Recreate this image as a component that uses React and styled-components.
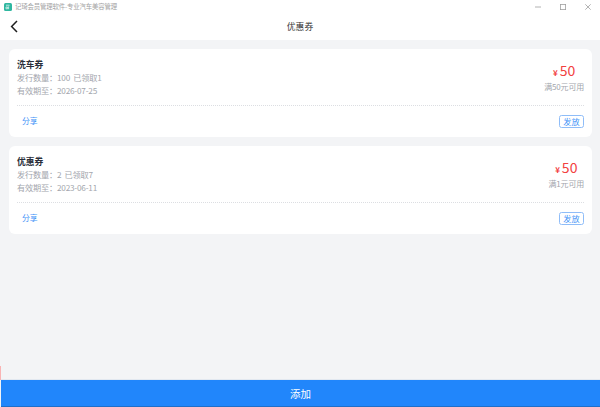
import React from "react";
import styled, { createGlobalStyle } from "styled-components";

const GlobalStyle = createGlobalStyle`
  html, body {
    margin: 0;
    padding: 0;
    background: #f3f4f6;
  }
  * {
    box-sizing: border-box;
  }
`;

const FONT = `"Noto Sans CJK SC", "Noto Sans", sans-serif`;

const Page = styled.div`
  position: relative;
  width: 600px;
  height: 407px;
  overflow: hidden;
  display: flex;
  flex-direction: column;
  background: #f3f4f6;
  font-family: ${FONT};
`;

const TitleBar = styled.div`
  height: 13px;
  flex: none;
  display: flex;
  align-items: center;
  padding: 0 9px 0 4px;
  background: #fff;
`;

const AppName = styled.span`
  margin-left: 3px;
  font-size: 6.4px;
  letter-spacing: -0.15px;
  line-height: 13px;
  color: #a2a2a2;
  white-space: nowrap;
`;

const WindowButtons = styled.div`
  margin-left: auto;
  display: flex;
  align-items: center;
  gap: 19px;
`;

const Header = styled.div`
  height: 27px;
  flex: none;
  display: flex;
  align-items: center;
  justify-content: center;
  position: relative;
  background: #fff;
`;

const BackButton = styled.div`
  position: absolute;
  left: 10px;
  top: 7px;
  display: flex;
`;

const HeaderTitle = styled.div`
  font-size: 8.8px;
  color: #333;
  line-height: 27px;
`;

const List = styled.div`
  flex: 1;
  display: flex;
  flex-direction: column;
  gap: 9px;
  padding: 9px 8px 0 9px;
`;

const Card = styled.div`
  height: 88px;
  background: #fff;
  border-radius: 6px;
  padding: 0 8px;
  display: flex;
  flex-direction: column;
`;

const CardTop = styled.div`
  height: 57px;
  display: flex;
  justify-content: space-between;
  border-bottom: 1px dotted #dcdee2;
`;

const Info = styled.div`
  padding-top: 9px;
`;

const CardTitle = styled.div`
  font-size: 8.8px;
  font-weight: 700;
  line-height: 13px;
  color: #2b2f3a;
`;

const InfoRow = styled.div`
  font-size: 8.2px;
  letter-spacing: -0.2px;
  line-height: 13px;
  color: #a3a6ad;
  white-space: pre;
`;

const Price = styled.div`
  display: flex;
  flex-direction: column;
  align-items: center;
  padding-top: 13px;
`;

const Amount = styled.div`
  color: #f2413f;
  font-size: 14px;
  line-height: 16px;
  display: flex;
  align-items: baseline;
`;

const Yen = styled.span`
  font-size: 8px;
  font-weight: 700;
  margin-right: 2px;
`;

const Condition = styled.div`
  font-size: 8px;
  letter-spacing: -0.2px;
  line-height: 12px;
  color: #a3a6ad;
`;

const CardBottom = styled.div`
  flex: 1;
  display: flex;
  align-items: center;
  justify-content: space-between;
  padding-bottom: 1px;
`;

const ShareLink = styled.span`
  margin: 0 0 1px 5px;
  font-size: 7.8px;
  color: #3f93f7;
`;

const SendButton = styled.div`
  width: 25px;
  height: 13px;
  border: 1px solid #8fbdf8;
  border-radius: 2.5px;
  font-size: 8.2px;
  line-height: 11px;
  text-align: center;
  color: #3f93f7;
`;

const AddButton = styled.div`
  height: 27px;
  flex: none;
  margin-left: 1px;
  background: #2186fb;
  border-bottom: 1px solid #1f6fc9;
  color: #fff;
  font-size: 10.5px;
  line-height: 27px;
  text-align: center;
  box-shadow: 0 -1px 0 #e2e8f0;
`;

const EdgeMark = styled.div`
  position: absolute;
  left: 0;
  top: 366px;
  width: 1px;
  height: 14px;
  background: #f9b4b4;
`;

const AppIcon = () => (
  <svg width="8" height="8" viewBox="0 0 8 8">
    <rect width="8" height="8" rx="1.5" fill="#2fb7a0" />
    <path d="M2 2.2h3.6M2 4h1.6v1.8h-1.6zM4.6 3.4v2.8" stroke="#dff5f0" strokeWidth="0.8" fill="none" />
  </svg>
);

const MinimizeIcon = () => (
  <svg width="6" height="6" viewBox="0 0 6 6">
    <path d="M0 3h6" stroke="#a0a0a0" strokeWidth="0.8" />
  </svg>
);

const MaximizeIcon = () => (
  <svg width="6" height="6" viewBox="0 0 6 6">
    <rect x="0.4" y="0.4" width="5.2" height="5.2" stroke="#a0a0a0" strokeWidth="0.8" fill="none" />
  </svg>
);

const CloseIcon = () => (
  <svg width="6" height="6" viewBox="0 0 6 6">
    <path d="M0.3 0.3l5.4 5.4M5.7 0.3l-5.4 5.4" stroke="#a0a0a0" strokeWidth="0.8" />
  </svg>
);

const BackIcon = () => (
  <svg width="9" height="13" viewBox="0 0 9 13">
    <path d="M7 1L1.6 6.5 7 12" stroke="#1f1f1f" strokeWidth="1.5" fill="none" />
  </svg>
);

const coupons = [
  { name: "洗车券", count: "发行数量：100  已领取1", expiry: "有效期至：2026-07-25", condition: "满50元可用" },
  { name: "优惠券", count: "发行数量：2  已领取7", expiry: "有效期至：2023-06-11", condition: "满1元可用" },
];

const App = () => (
  <Page>
    <GlobalStyle />
    <TitleBar>
      <AppIcon />
      <AppName>记琦会员管理软件-专业汽车美容管理</AppName>
      <WindowButtons>
        <MinimizeIcon />
        <MaximizeIcon />
        <CloseIcon />
      </WindowButtons>
    </TitleBar>
    <Header>
      <BackButton>
        <BackIcon />
      </BackButton>
      <HeaderTitle>优惠券</HeaderTitle>
    </Header>
    <List>
      {coupons.map((c) => (
        <Card key={c.name}>
          <CardTop>
            <Info>
              <CardTitle>{c.name}</CardTitle>
              <InfoRow>{c.count}</InfoRow>
              <InfoRow>{c.expiry}</InfoRow>
            </Info>
            <Price>
              <Amount>
                <Yen>¥</Yen>50
              </Amount>
              <Condition>{c.condition}</Condition>
            </Price>
          </CardTop>
          <CardBottom>
            <ShareLink>分享</ShareLink>
            <SendButton>发放</SendButton>
          </CardBottom>
        </Card>
      ))}
    </List>
    <AddButton>添加</AddButton>
    <EdgeMark />
  </Page>
);

export default App;
